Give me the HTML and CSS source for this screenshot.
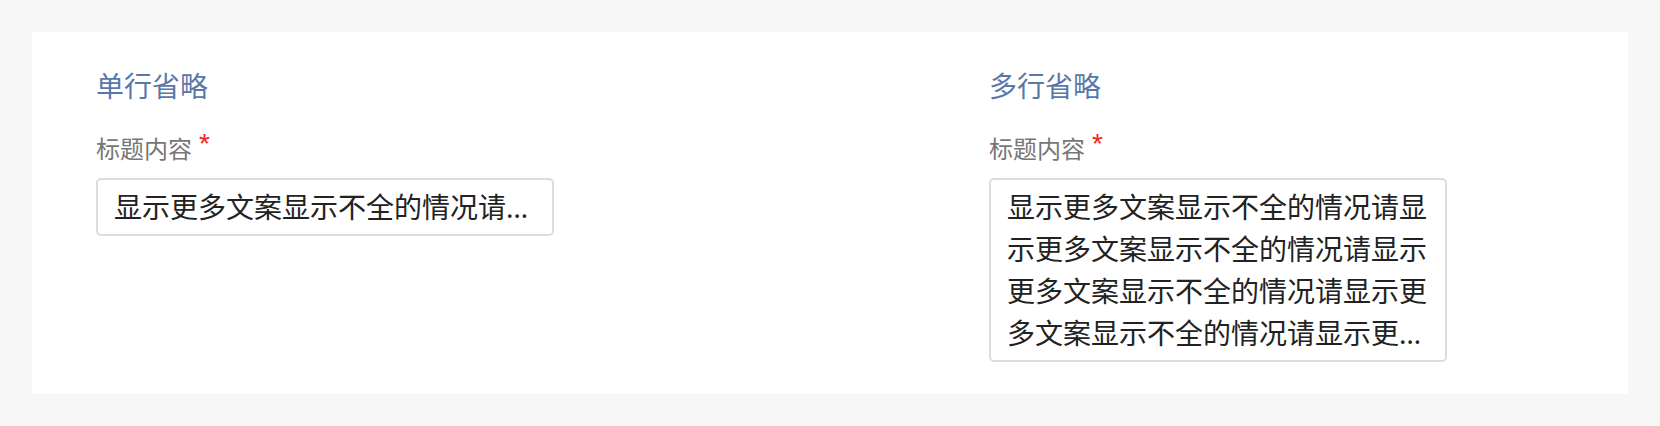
FILE: index.html
```html
<!DOCTYPE html>
<html lang="zh-CN">
<head>
<meta charset="utf-8">
<title>省略</title>
<link rel="stylesheet" href="styles.css">
</head>
<body>
<div class="card">
  <section class="col">
    <h2 class="title">单行省略</h2>
    <div class="label">标题内容<span class="req">*</span></div>
    <div class="box single">显示更多文案显示不全的情况请显示更多文案显示不全的情况请显示更多文案显示不全的情况请</div>
  </section>
  <section class="col">
    <h2 class="title">多行省略</h2>
    <div class="label">标题内容<span class="req">*</span></div>
    <div class="box multi">显示更多文案显示不全的情况请显示更多文案显示不全的情况请显示更多文案显示不全的情况请显示更多文案显示不全的情况请显示更多文案显示不全的情况请显示更多文案显示不全的情况请</div>
  </section>
</div>
</body>
</html>
```
FILE: styles.css
```css
html, body {
  margin: 0;
  padding: 0;
}
body {
  background: #f7f7f7;
  padding: 32px;
  font-family: "Noto Sans CJK SC", "Noto Sans", sans-serif;
}
.card {
  background: #fff;
  padding: 32px 64px;
  display: grid;
  grid-template-columns: 893px 1fr;
}
.col {
  display: flex;
  flex-direction: column;
  align-items: flex-start;
}
.title {
  margin: 0;
  font-size: 28px;
  line-height: 42px;
  font-weight: 400;
  color: #5a77a9;
}
.label {
  margin-top: 24px;
  font-size: 24px;
  line-height: 36px;
  color: #777;
  display: flex;
  align-items: flex-start;
}
.req {
  color: #f52222;
  font-family: "Liberation Sans", sans-serif;
  font-size: 28px;
  line-height: 28px;
  margin-left: 7px;
  margin-top: 0;
}
.box {
  margin-top: 12px;
  width: 458px;
  box-sizing: border-box;
  border: 2px solid #dcdcdc;
  border-radius: 5px;
  padding: 6px 16px;
  font-family: "Noto Sans", "Noto Sans CJK SC", sans-serif;
  font-size: 28px;
  line-height: 42px;
  color: #222;
}
.single {
  white-space: nowrap;
  overflow: hidden;
  text-overflow: ellipsis;
}
.multi {
  display: -webkit-box;
  -webkit-box-orient: vertical;
  -webkit-line-clamp: 4;
  overflow: hidden;
  word-break: break-all;
}
```
